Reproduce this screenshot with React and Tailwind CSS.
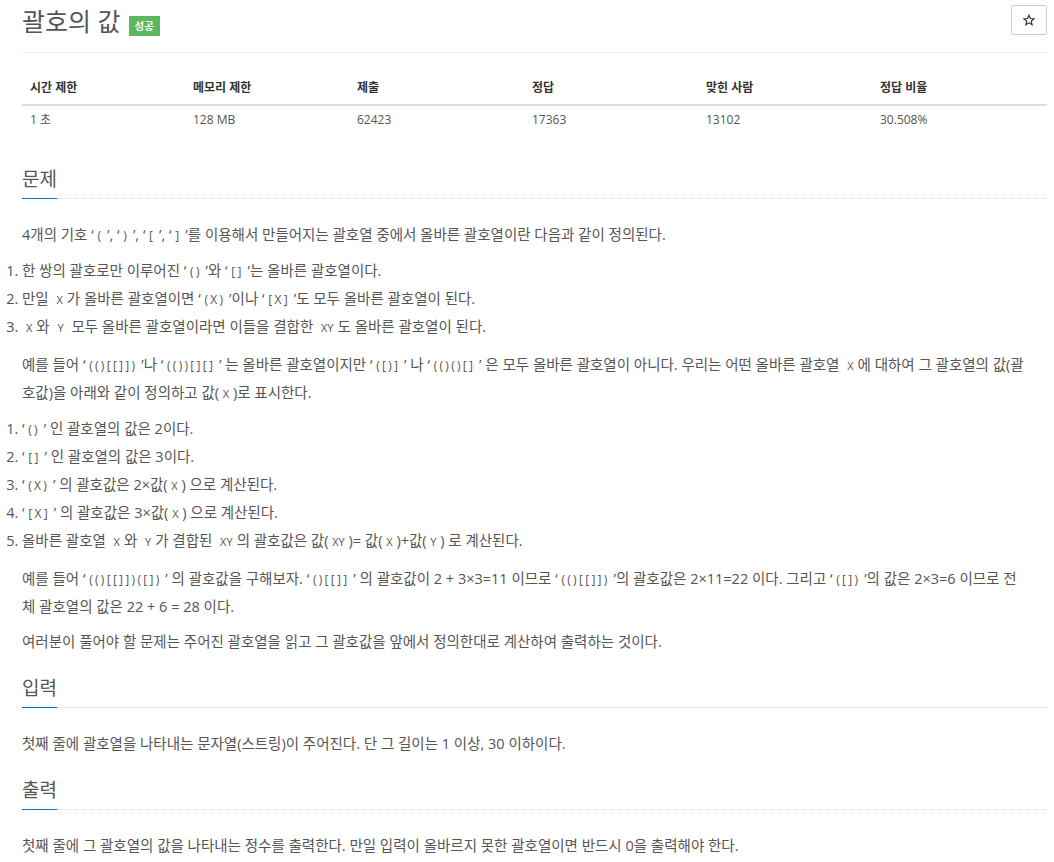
import React from 'react';

function Code({ children }) {
  return <span className="text-[12px] leading-none tracking-[2.3px]">{children}</span>;
}

function V({ children }) {
  return <span className="mx-[4px] text-[11px] leading-none">{children}</span>;
}

function S({ children }) {
  return <span className="text-[11px] leading-none">{children}</span>;
}

function Q({ children }) {
  return (
    <>
      ‘ <Code>{children}</Code> ’
    </>
  );
}

function Headline({ title }) {
  return (
    <div className="flex items-end">
      <h2 className="border-b border-[#0076c0] pb-[7px] text-[19px] leading-[24px] font-normal text-[#555]">
        {title}
      </h2>
      <div className="flex-1 border-b border-dotted border-[#dcdcdc]" />
    </div>
  );
}

const stats = [
  { label: '시간 제한', value: '1 초', w: 'w-[163px]' },
  { label: '메모리 제한', value: '128 MB', w: 'w-[164px]' },
  { label: '제출', value: '62423', w: 'w-[175px]' },
  { label: '정답', value: '17363', w: 'w-[174px]' },
  { label: '맞힌 사람', value: '13102', w: 'w-[174px]' },
  { label: '정답 비율', value: '30.508%', w: '' },
];

export default function App() {
  return (
    <div className="min-h-screen bg-white pl-[22px] pr-[7px] font-['Open_Sans','Noto_Sans_CJK_KR',sans-serif] text-[#555]">
      {/* Title */}
      <div className="flex items-start justify-between border-b border-[#eee] pb-[15px] pt-[5px]">
        <div className="flex items-end">
          <h1 className="text-[25px] leading-[32px] font-normal text-[#555]">괄호의 값</h1>
          <span className="mb-[1px] ml-[8px] bg-[#5cb85c] px-[6px] py-[3px] text-[10.5px] font-bold leading-[14px] text-white">
            성공
          </span>
        </div>
        <button
          type="button"
          className="flex h-[30px] w-[36px] items-center justify-center rounded-[2px] border border-[#ccc] bg-white"
        >
          <svg className="h-[12px] w-[12px]" viewBox="0 0 24 24" fill="none" stroke="#333" strokeWidth={2.4} strokeLinejoin="miter">
            <path d="M12 2.5l2.8 6.6 7.1.6-5.4 4.7 1.6 7-6.1-3.7-6.1 3.7 1.6-7-5.4-4.7 7.1-.6z" />
          </svg>
        </button>
      </div>

      {/* Stats table */}
      <table className="mt-[19px] w-full border-collapse text-[12px]">
        <thead>
          <tr className="border-b-2 border-[#ddd]">
            {stats.map((s) => (
              <th key={s.label} className={`${s.w} px-[8px] py-[8px] text-left font-bold leading-[16px] text-[#333]`}>
                {s.label}
              </th>
            ))}
          </tr>
        </thead>
        <tbody>
          <tr>
            {stats.map((s) => (
              <td key={s.label} className="px-[8px] py-[6px] leading-[16px]">
                {s.value}
              </td>
            ))}
          </tr>
        </tbody>
      </table>

      {/* 문제 */}
      <section className="mt-[33px]">
        <Headline title="문제" />
        <div className="mt-[22px] text-[14.5px] leading-[28px]">
          <p>
            4개의 기호 <Q>(</Q>, <Q>)</Q>, <Q>[</Q>, <Q>]</Q>를 이용해서 만들어지는 괄호열 중에서 올바른 괄호열이란 다음과 같이 정의된다.
          </p>
          <ol className="mt-[8px] list-outside list-decimal">
            <li>한 쌍의 괄호로만 이루어진 <Q>()</Q>와 <Q>[]</Q>는 올바른 괄호열이다.</li>
            <li>
              만일 <V>X</V>가 올바른 괄호열이면 <Q>(X)</Q>이나 <Q>[X]</Q>도 모두 올바른 괄호열이 된다.
            </li>
            <li>
              <V>X</V>와 <V>Y</V> 모두 올바른 괄호열이라면 이들을 결합한 <V>XY</V>도 올바른 괄호열이 된다.
            </li>
          </ol>
          <p className="mt-[10px]">
            예를 들어 <Q>(()[[]])</Q>나 <Q>(())[][]</Q> 는 올바른 괄호열이지만 <Q>([)]</Q> 나 <Q>(()()[]</Q> 은 모두 올바른 괄호열이 아니다. 우리는 어떤 올바른 괄호열 <V>X</V>에 대하여 그 괄호열의 값(괄
            <br />
            호값)을 아래와 같이 정의하고 값( <S>X</S> )로 표시한다.
          </p>
          <ol className="mt-[8px] list-outside list-decimal">
            <li><Q>()</Q> 인 괄호열의 값은 2이다.</li>
            <li><Q>[]</Q> 인 괄호열의 값은 3이다.</li>
            <li><Q>(X)</Q> 의 괄호값은 2×값( <S>X</S> ) 으로 계산된다.</li>
            <li><Q>[X]</Q> 의 괄호값은 3×값( <S>X</S> ) 으로 계산된다.</li>
            <li>
              올바른 괄호열 <V>X</V>와 <V>Y</V>가 결합된 <V>XY</V>의 괄호값은 값( <S>XY</S> )= 값( <S>X</S> )+값( <S>Y</S> ) 로 계산된다.
            </li>
          </ol>
          <p className="mt-[10px]">
            예를 들어 <Q>(()[[]])([])</Q> 의 괄호값을 구해보자. <Q>()[[]]</Q> 의 괄호값이 2 + 3×3=11 이므로 <Q>(()[[]])</Q>의 괄호값은 2×11=22 이다. 그리고 <Q>([])</Q>의 값은 2×3=6 이므로 전
            <br />
            체 괄호열의 값은 22 + 6 = 28 이다.
          </p>
          <p className="mt-[7px]">여러분이 풀어야 할 문제는 주어진 괄호열을 읽고 그 괄호값을 앞에서 정의한대로 계산하여 출력하는 것이다.</p>
        </div>
      </section>

      {/* 입력 */}
      <section className="mt-[20px]">
        <Headline title="입력" />
        <p className="mt-[22px] text-[14.5px] leading-[28px]">
          첫째 줄에 괄호열을 나타내는 문자열(스트링)이 주어진다. 단 그 길이는 1 이상, 30 이하이다.
        </p>
      </section>

      {/* 출력 */}
      <section className="mt-[20px]">
        <Headline title="출력" />
        <p className="mt-[22px] text-[14.5px] leading-[28px]">
          첫째 줄에 그 괄호열의 값을 나타내는 정수를 출력한다. 만일 입력이 올바르지 못한 괄호열이면 반드시 0을 출력해야 한다.
        </p>
      </section>
    </div>
  );
}
